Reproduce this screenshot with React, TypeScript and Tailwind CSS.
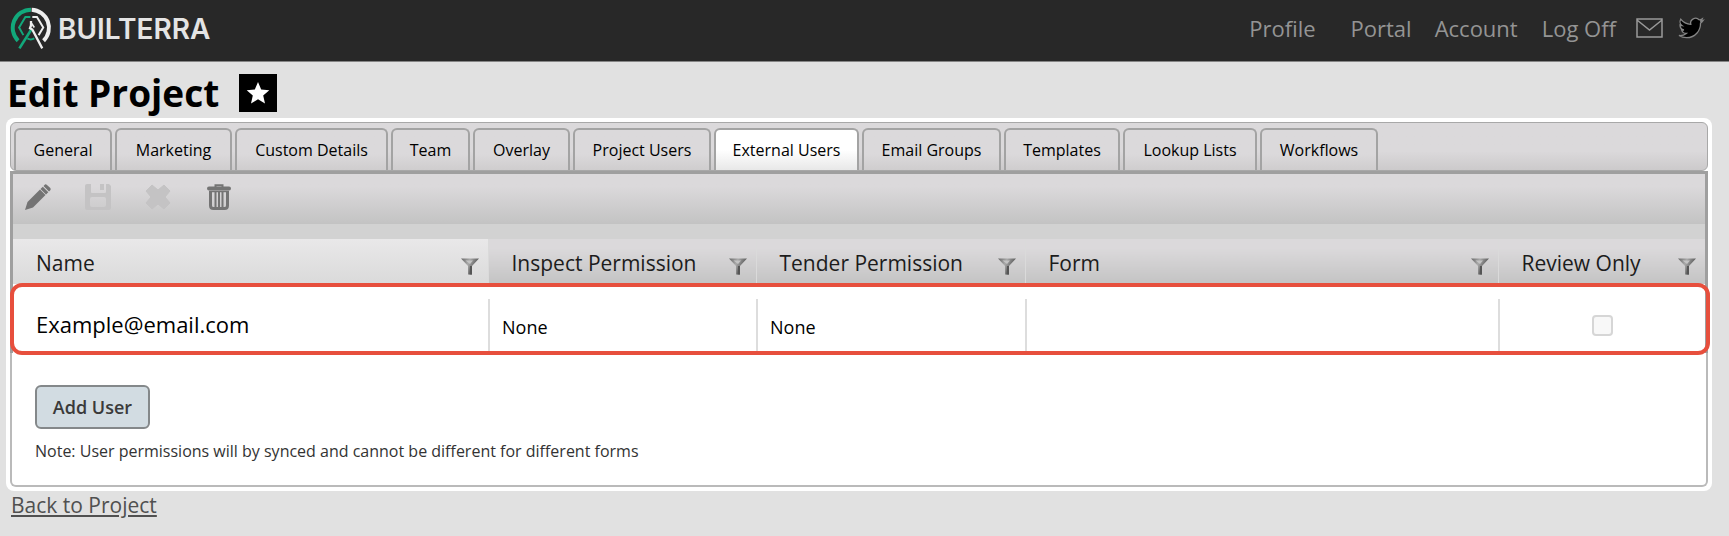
import React, { useState } from "react";

const tabs = [
  { label: "General", width: "w-[98px]" },
  { label: "Marketing", width: "w-[117px]" },
  { label: "Custom Details", width: "w-[153px]" },
  { label: "Team", width: "w-[79px]" },
  { label: "Overlay", width: "w-[97px]" },
  { label: "Project Users", width: "w-[138px]" },
  { label: "External Users", width: "w-[145px]" },
  { label: "Email Groups", width: "w-[139px]" },
  { label: "Templates", width: "w-[116px]" },
  { label: "Lookup Lists", width: "w-[134px]" },
  { label: "Workflows", width: "w-[118px]" },
];

const columns = [
  { label: "Name", width: "w-[475px]" },
  { label: "Inspect Permission", width: "w-[268px]" },
  { label: "Tender Permission", width: "w-[269px]" },
  { label: "Form", width: "" },
  { label: "Review Only", width: "w-[207px]" },
];

const Logo: React.FC = () => (
  <svg viewBox="30 20 126 130" className="h-[43px] w-[42px]" fill="none" aria-hidden="true">
    <g stroke="#12a87b">
      <path d="M93 28A55 55 0 0 0 54 122" strokeWidth="12" />
      <path d="M91 50H76L57 82L70 105" strokeWidth="6" />
      <path d="M94 88L58 145" strokeWidth="8" />
      <path d="M82 115Q92 121 103 115" strokeWidth="6" />
    </g>
    <g stroke="#eeeeee">
      <path d="M95 28A55 55 0 0 1 131 122" strokeWidth="12" />
      <path d="M97 50H111L130 82L116 105" strokeWidth="6" />
      <path d="M93 62V76L90 84L97 88L127 145" strokeWidth="7" />
      <path d="M95 70L103 82" strokeWidth="5" />
    </g>
  </svg>
);

const FilterIcon: React.FC = () => (
  <svg viewBox="0 0 18 17" className="h-[17px] w-[18px]" aria-hidden="true">
    <defs>
      <linearGradient id="funnel" x1="0" x2="1" y1="0" y2="0.4">
        <stop offset="0" stopColor="#666" />
        <stop offset="0.45" stopColor="#aaa" />
        <stop offset="1" stopColor="#444" />
      </linearGradient>
    </defs>
    <path d="M0 0.5H18L11 8V16.5H7V8Z" fill="url(#funnel)" />
    <path d="M4.500 2.500H12L9 6Z" fill="#c4c4c4" />
    <path d="M9 8H11V16.500H8.500Z" fill="#555" />
  </svg>
);

const EditIcon = () => (
  <svg viewBox="0 0 26 26" className="h-[26px] w-[26px]" fill="currentColor" aria-hidden="true">
    <path d="M0 26L2.5 18L15 5.5L20.5 11L8 23.5Z" />
    <path d="M15.500 5L17.800 2.700L23.300 8.200L21 10.500Z" />
    <path d="M18.500 2L20 0.5Q21 0 22 1L25.300 4Q26 5 25.500 6L24 7.500Z" />
  </svg>
);

const SaveIcon = () => (
  <svg viewBox="0 0 26 26" className="h-[26px] w-[26px]" fill="currentColor" aria-hidden="true">
    <path
      fillRule="evenodd"
      d="M2 0H6V8Q6 9 7 9H20Q21 9 21 8V0H24L26 2V24Q26 26 24 26H2Q0 26 0 24V2Q0 0 2 0ZM7 13Q5 13 5 15V21Q5 23 7 23H19Q21 23 21 21V15Q21 13 19 13Z"
    />
    <path d="M15 0H19V6H15Z" />
  </svg>
);

const CancelIcon = () => (
  <svg viewBox="0 0 26 26" className="h-[26px] w-[26px]" fill="currentColor" stroke="currentColor" strokeLinejoin="round" aria-hidden="true">
    <path d="M7 1L13 6L19 1L25 7L20 13L25 19L19 25L13 20L7 25L1 19L6 13L1 7Z" />
  </svg>
);

const DeleteIcon = () => (
  <svg viewBox="0 0 24 26" className="h-[26px] w-[24px]" fill="none" stroke="currentColor" aria-hidden="true">
    <path d="M8.500 3V1.200H15.500V3" strokeWidth="2" />
    <path d="M2 4.500H22" strokeWidth="4" strokeLinecap="round" />
    <path d="M3.500 8V21.500Q3.500 24.500 6.500 24.500H17.500Q20.500 24.500 20.500 21.500V8" strokeWidth="3" />
    <path d="M2 7.500H22" strokeWidth="1.500" />
    <path d="M8.500 8V24M12 8V24M15.500 8V24" strokeWidth="2" />
  </svg>
);

const Header: React.FC = () => (
  <header className="flex h-[62px] items-center justify-between border-b border-[#858585] bg-[#282828] pr-[24px] pl-[10px]">
    <a href="#home" className="flex items-center gap-[6px] pb-1">
      <Logo />
      <span className="font-['Inter'] text-[28px] leading-[28px] font-semibold text-[#e4e4e4]">
        BUILTERRA
      </span>
    </a>
    <nav className="flex items-center pb-[6px] text-[22px] leading-[28px] text-[#949494]">
      <a href="#profile" className="mr-[35px]">Profile</a>
      <a href="#portal" className="mr-[23px]">Portal</a>
      <a href="#account" className="mr-[24px]">Account</a>
      <a href="#logoff" className="mr-[20px]">Log Off</a>
      <a href="#mail" aria-label="Email" className="mr-[15px]">
        <svg viewBox="0 0 27 20" className="h-[20px] w-[27px]" fill="none" stroke="#999" strokeWidth="1.500">
          <path d="M1 1H26V19H1ZM1 2L13.500 12L26 2" />
        </svg>
      </a>
      <a href="#twitter" aria-label="Twitter">
        <svg viewBox="-1 0 27 24" className="h-[24px] w-[27px]" fill="#000" stroke="#858585" strokeWidth="1.300">
          <path d="M24 4.600a10 10 0 0 1-2.800.8 5 5 0 0 0 2.100-2.700 10 10 0 0 1-3.100 1.200 4.900 4.900 0 0 0-8.400 4.500A14 14 0 0 1 1.700 3.200a4.900 4.900 0 0 0 1.500 6.500 4.900 4.900 0 0 1-2.200-.6 4.900 4.900 0 0 0 3.900 4.900 5 5 0 0 1-2.200.1 4.900 4.900 0 0 0 4.600 3.400A9.900 9.900 0 0 1 0 19.500a14 14 0 0 0 7.500 2.200c9.100 0 14.300-7.700 14-14.600A10 10 0 0 0 24 4.600z" />
        </svg>
      </a>
    </nav>
  </header>
);

const App: React.FC = () => {
  const [active, setActive] = useState("External Users");

  return (
    <div className="min-h-screen bg-[#e1e1e1] font-['Open_Sans','Noto_Sans',sans-serif] text-black">
      <Header />

      <div className="flex h-[56px] items-center gap-[20px] pt-[6px] pl-[7px]">
        <h1 className="text-[37px] leading-[48px] font-bold">Edit Project</h1>
        <button type="button" aria-label="Favourite" className="flex size-[38px] items-center justify-center bg-black">
          <svg viewBox="0 0 24 24" className="size-[24px]" fill="#fff">
            <path d="M12 1L15.200 8.500L23.300 9.200L17.200 14.500L19 22.500L12 18.300L5 22.500L6.800 14.500L0.700 9.200L8.800 8.500Z" />
          </svg>
        </button>
      </div>

      <main className="mr-[17px] ml-[6px] rounded-lg bg-white p-[4px]">
        <div
          role="tablist"
          className="flex h-[49px] items-end gap-[3px] rounded-md border border-[#a8a8a8] bg-linear-to-b from-[#dbd9db] from-60% to-[#cccacb] pl-[3px]"
        >
          {tabs.map((tab) => (
            <button
              key={tab.label}
              type="button"
              role="tab"
              aria-selected={active === tab.label}
              onClick={() => setActive(tab.label)}
              className={`h-[42px] shrink-0 rounded-t-md border-2 border-b-0 border-[#a3a3a3] bg-linear-to-b text-center text-[16px] leading-[24px] whitespace-nowrap ${tab.width} ${
                active === tab.label
                  ? "from-white from-50% to-[#e8e8e8]"
                  : "from-[#dbd9db] from-60% to-[#cfcdce]"
              }`}
            >
              {tab.label}
            </button>
          ))}
        </div>

        <div className="relative border-x-3 border-t-3 border-[#9f9f9f]">
          <div className="flex h-[50px] items-center bg-linear-to-b from-[#dbd9db] from-25% to-[#c3c3c3] pb-[4px] pl-[12px] text-[#747474]">
            <button type="button" aria-label="Edit" className="mr-[34px]"><EditIcon /></button>
            <button type="button" aria-label="Save" disabled className="mr-[34px] text-[#c4c3c4]"><SaveIcon /></button>
            <button type="button" aria-label="Cancel" disabled className="mr-[36px] text-[#c4c3c4]"><CancelIcon /></button>
            <button type="button" aria-label="Delete"><DeleteIcon /></button>
          </div>
          <div className="h-[15px] bg-[#d2d2d2]" />

          <table className="w-full table-fixed border-collapse">
            <thead>
              <tr className="h-[45px]">
                {columns.map((col, i) => (
                  <th
                    key={col.label}
                    className={`bg-linear-to-b p-0 text-left text-[21px] leading-[28px] font-normal text-[#1c1c1c] ${col.width} ${
                      i === 0
                        ? "from-[#e9e8e9] to-[#dadada]"
                        : "border-l border-[#dadada] from-[#dbd9db] from-20% to-[#c3c3c3]"
                    }`}
                  >
                    <div className="flex items-center justify-between pt-[3px] pr-[9px] pl-[23px]">
                      <span>{col.label}</span>
                      <button type="button" aria-label={`Filter ${col.label}`} className="pt-[6px]">
                        <FilterIcon />
                      </button>
                    </div>
                  </th>
                ))}
              </tr>
            </thead>
            <tbody>
              <tr className="bg-white align-bottom">
                <td className="p-0 pt-[15px]">
                  <div className="flex h-[54px] items-center pb-[5px] pl-[23px] text-[22px] leading-[28px]">
                    Example@email.com
                  </div>
                </td>
                <td className="p-0 pt-[15px]">
                  <div className="flex h-[54px] items-center border-l-2 border-[#dddddd] pt-[2px] pl-[12px] text-[18px] leading-[24px]">
                    None
                  </div>
                </td>
                <td className="p-0 pt-[15px]">
                  <div className="flex h-[54px] items-center border-l-2 border-[#dddddd] pt-[2px] pl-[12px] text-[18px] leading-[24px]">
                    None
                  </div>
                </td>
                <td className="p-0 pt-[15px]">
                  <div className="h-[54px] border-l-2 border-[#dddddd]" />
                </td>
                <td className="p-0 pt-[15px]">
                  <div className="flex h-[54px] items-center justify-center border-l-2 border-[#dddddd] pb-[2px]">
                    <input
                      type="checkbox"
                      disabled
                      aria-label="Review Only"
                      className="size-[21px] appearance-none rounded-sm border-2 border-[#d6d6d6] bg-[#f8f8f8]"
                    />
                  </div>
                </td>
              </tr>
            </tbody>
          </table>

          {/* highlight around the user row */}
          <div className="pointer-events-none absolute -right-[5px] -bottom-[2px] -left-[3px] h-[72px] rounded-xl border-4 border-[#e74f3d]" />
        </div>

        <div className="flex flex-col items-start rounded-b-md border-x-2 border-b-2 border-[#bababa] px-[23px] pt-[32px] pb-[22px]">
          <button
            type="button"
            className="h-[44px] w-[115px] rounded-md border-2 border-[#84888a] bg-[#d2dce2] text-[18px] leading-[24px] font-semibold text-[#3a3a3a]"
          >
            Add User
          </button>
          <p className="mt-[10px] text-[16px] leading-[24px] text-[#333]">
            Note: User permissions will by synced and cannot be different for different forms
          </p>
        </div>
      </main>

      <a href="#project" className="ml-[11px] inline-block text-[21px] leading-[28px] text-[#505050] underline">
        Back to Project
      </a>
    </div>
  );
};

export default App;
